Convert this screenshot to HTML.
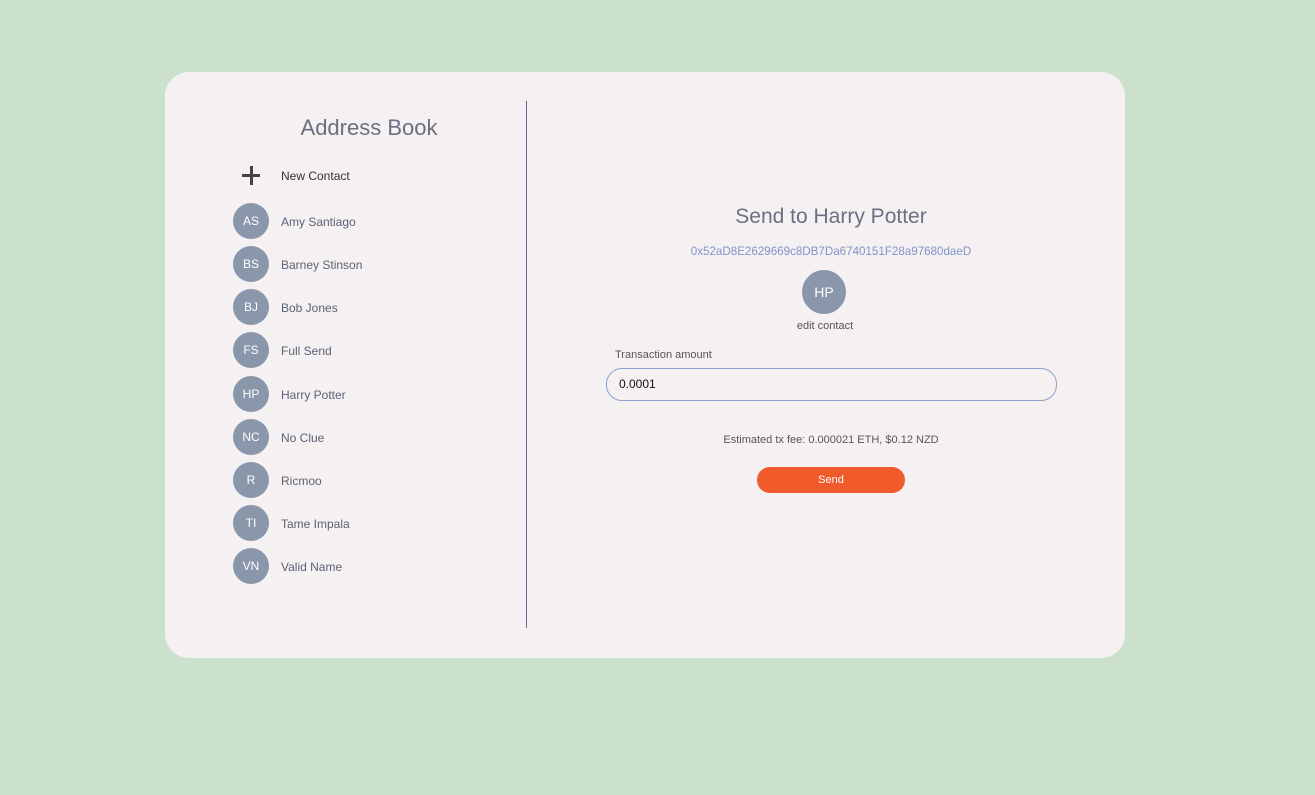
<!DOCTYPE html>
<html><head><style>
body{margin:0;width:1315px;height:795px;background:#cce1cc;font-family:"Liberation Sans",sans-serif;position:relative;overflow:hidden}
.card{position:absolute;left:165px;top:72px;width:960px;height:586px;background:#f5f1f2;border-radius:24px}
.abs{position:absolute}
.div{left:526px;top:101px;width:1px;height:527px;background:#5e6b8c}
.av{position:absolute;width:36px;height:36px;border-radius:50%;background:#8a96aa;color:#fff;font-size:12px;display:flex;align-items:center;justify-content:center}
.nm{position:absolute;left:281px;font-size:12px;color:#5b6274}
.c{text-align:center;transform:translateX(-50%);white-space:nowrap}
</style></head><body>
<div class="card"></div>
<div class="abs div"></div>
<div class="abs c" style="left:369px;top:115px;font-size:22px;color:#6a7082">Address Book</div>
<div class="abs" style="left:242px;top:174px;width:18px;height:3px;background:#444"></div>
<div class="abs" style="left:249.5px;top:166px;width:3px;height:19px;background:#444"></div>
<div class="nm" style="top:169px;color:#333">New Contact</div>
<div class="av" style="left:233px;top:203px">AS</div><div class="nm" style="top:215px">Amy Santiago</div>
<div class="av" style="left:233px;top:246px">BS</div><div class="nm" style="top:258px">Barney Stinson</div>
<div class="av" style="left:233px;top:289px">BJ</div><div class="nm" style="top:301px">Bob Jones</div>
<div class="av" style="left:233px;top:332px">FS</div><div class="nm" style="top:344px">Full Send</div>
<div class="av" style="left:233px;top:376px">HP</div><div class="nm" style="top:388px">Harry Potter</div>
<div class="av" style="left:233px;top:419px">NC</div><div class="nm" style="top:431px">No Clue</div>
<div class="av" style="left:233px;top:462px">R</div><div class="nm" style="top:474px">Ricmoo</div>
<div class="av" style="left:233px;top:505px">TI</div><div class="nm" style="top:517px">Tame Impala</div>
<div class="av" style="left:233px;top:548px">VN</div><div class="nm" style="top:560px">Valid Name</div>

<div class="abs c" style="left:831px;top:205px;font-size:21px;color:#6a7082">Send to Harry Potter</div>
<div class="abs c" style="left:831px;top:245px;font-size:11.6px;color:#7f93c8">0x52aD8E2629669c8DB7Da6740151F28a97680daeD</div>
<div class="av" style="left:802px;top:270px;width:44px;height:44px;font-size:14px">HP</div>
<div class="abs c" style="left:825px;top:320px;font-size:11px;color:#555">edit contact</div>
<div class="abs" style="left:615px;top:349px;font-size:11px;color:#555">Transaction amount</div>
<div class="abs" style="left:606px;top:368px;width:449px;height:31px;border:1px solid #8aa3cc;border-radius:16px;background:#f5f1f2"></div>
<div class="abs" style="left:619px;top:377px;font-size:12px;color:#111">0.0001</div>
<div class="abs c" style="left:831px;top:434px;font-size:11px;color:#555">Estimated tx fee: 0.000021 ETH, $0.12 NZD</div>
<div class="abs" style="left:757px;top:467px;width:148px;height:26px;border-radius:13px;background:#f15a2b;color:#fff;font-size:11px;display:flex;align-items:center;justify-content:center">Send</div>
</body></html>
